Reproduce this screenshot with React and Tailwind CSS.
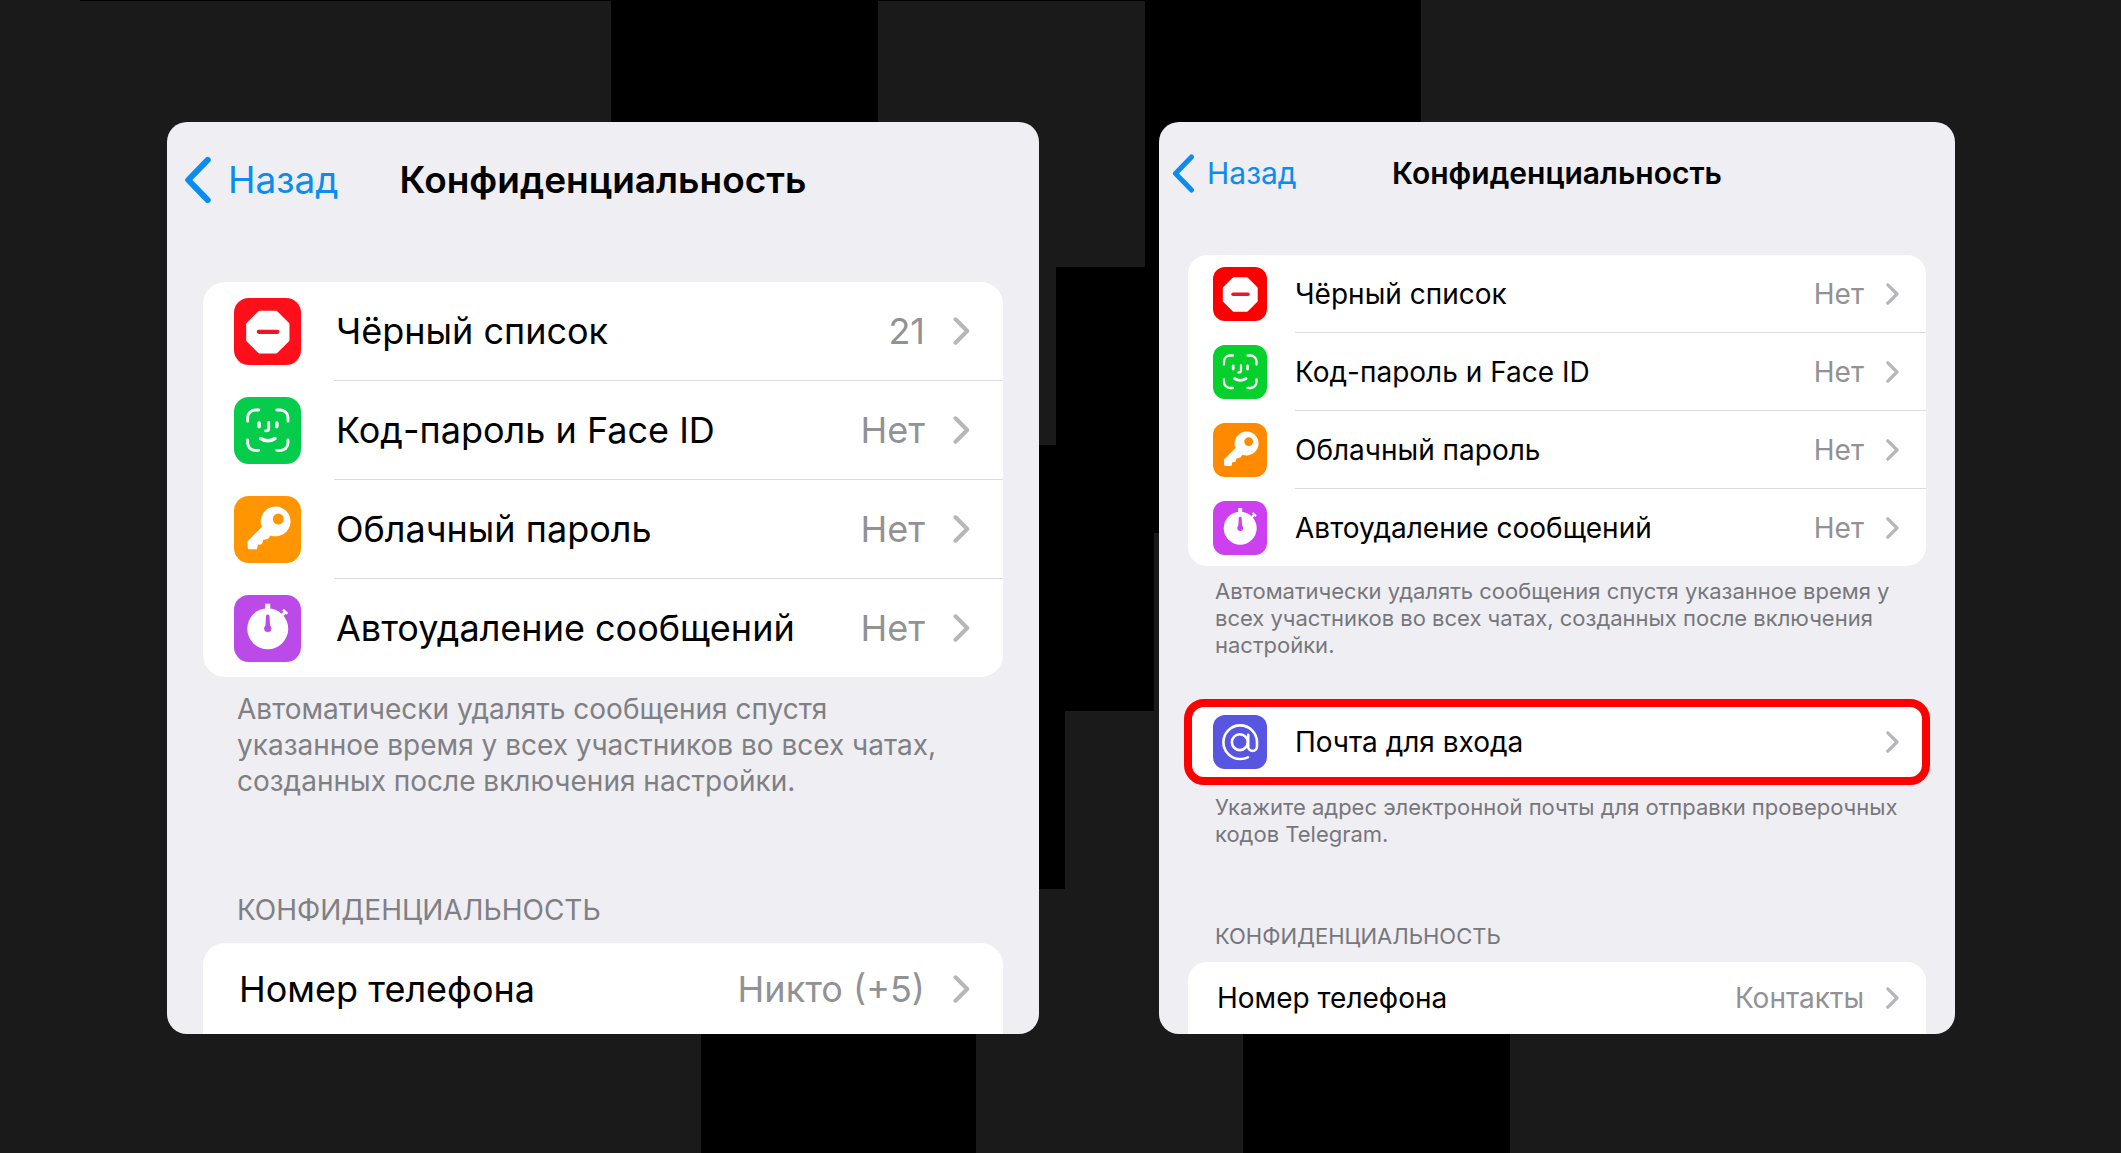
import { clsx } from "clsx";

function Backdrop() {
  return (
    <svg
      className="absolute inset-0 h-full w-full"
      viewBox="0 0 2121 1153"
      preserveAspectRatio="xMidYMid slice"
      aria-hidden="true"
    >
      <rect x="80" y="0" width="1341" height="1" fill="#000" />
      <rect x="611" y="0" width="267" height="267" fill="#000" />
      <rect x="1145" y="0" width="276" height="267" fill="#000" />
      <path d="M1056 267H1421V533H1154V711H1065V889H878V445H1056Z" fill="#000" />
      <rect x="701" y="889" width="275" height="264" fill="#000" />
      <rect x="1243" y="889" width="267" height="264" fill="#000" />
    </svg>
  );
}

function BlockIcon() {
  return (
    <>
      <path
        d="M20.5 11.5H34L43.5 21V34L34 43.5H20.5L11 34V21Z"
        fill="#fff"
        stroke="#fff"
        strokeWidth="2.4"
        strokeLinejoin="round"
      />
      <path d="M20 27.3H35" stroke="#e8182a" strokeWidth="3.4" strokeLinecap="round" />
    </>
  );
}

function FaceIcon() {
  return (
    <g fill="none" stroke="#fff" strokeWidth="2.3" strokeLinecap="round">
      <path d="M11 19.5V16.5A6 6 0 0 1 17 10.5H20" />
      <path d="M34.5 10.5H37.5A6 6 0 0 1 43.5 16.5V19.5" />
      <path d="M43.5 34.5V37A6 6 0 0 1 37.5 43H34.5" />
      <path d="M20 43H17A6 6 0 0 1 11 37V34.5" />
      <path d="M20.2 21V24" strokeWidth="2.8" />
      <path d="M34.5 21V24" strokeWidth="2.8" />
      <path d="M28 20.5V25.5Q28 27.5 25.5 27.3" />
      <path d="M21.5 33.5Q27.3 37.2 33 33.5" strokeWidth="2.8" />
    </g>
  );
}

function KeyIcon() {
  return (
    <path
      fill="#fff"
      fillRule="evenodd"
      d="M33.5 8.5A12 12 0 1 1 29.5 31.8L27.5 34.5L23.5 35.5L22.5 38.8L19.3 39.2L18.5 43H12.5Q11 43 11 41.5V36.5L22.4 25A12 12 0 0 1 33.5 8.5ZM35.7 14.2A4.4 4.4 0 1 0 35.7 23A4.4 4.4 0 1 0 35.7 14.2Z"
    />
  );
}

function TimerIcon({ color }) {
  return (
    <>
      <circle cx="27.2" cy="27.2" r="16.5" fill="#fff" />
      <path d="M27.2 7V12" stroke="#fff" strokeWidth="4" />
      <path d="M37 18L41.5 13.5" stroke="#fff" strokeWidth="2.4" />
      <path d="M39.5 11.8L43 15.3" stroke="#fff" strokeWidth="2" />
      <path d="M25.8 16.5Q27.2 15 28.6 16.5L29.1 26H25.3Z" fill={color} />
      <circle cx="27.2" cy="27" r="2.9" fill={color} />
    </>
  );
}

function AtIcon() {
  return (
    <g fill="none" stroke="#fff" strokeWidth="2.6" strokeLinecap="round">
      <circle cx="26.8" cy="27.2" r="7.9" />
      <path d="M35.2 19.8V31.5A4.4 4.4 0 0 0 44 31.5V27.2A16.8 16.8 0 1 0 27.2 44Q31.5 44 35 42.3" />
    </g>
  );
}

const glyphs = { block: BlockIcon, face: FaceIcon, key: KeyIcon, timer: TimerIcon, at: AtIcon };

function AppIcon({ name, color, large }) {
  const Glyph = glyphs[name];
  return (
    <svg
      className={clsx("shrink-0", large ? "size-[67px]" : "size-[54px]")}
      viewBox="0 0 54 54"
      aria-hidden="true"
    >
      <rect width="54" height="54" rx="12" fill={color} />
      <Glyph color={color} />
    </svg>
  );
}

function Chevron({ large }) {
  return (
    <svg
      className={clsx("shrink-0", large ? "h-[28px] w-[17px]" : "h-[22px] w-[13px]")}
      viewBox="0 0 13 22"
      fill="none"
      stroke="#b7b7ba"
      strokeWidth="3.2"
      strokeLinecap="round"
      strokeLinejoin="round"
      aria-hidden="true"
    >
      <path d="M1.8 1.8L11 11L1.8 20.2" />
    </svg>
  );
}

// Spacing of a row: the full-height list rows, the bordered one, and the rows cut by the card's edge.
const rowSizes = {
  large: "min-h-[98px] pl-[2px] pr-[33px]",
  largeShort: "min-h-[91px] pr-[33px]",
  small: "min-h-[77px] pr-[27px]",
  smallShort: "min-h-[72px] pr-[27px]",
  framed: "min-h-[70px] pr-[23px]",
};

const rowInsets = {
  large: "gap-[33px] pl-[31px]",
  largeShort: "pl-9",
  small: "gap-7 pl-[25px]",
  smallShort: "pl-[29px]",
  framed: "gap-7 pl-[21px]",
};

function Row({ size, icon, color, label, value, last }) {
  const large = size === "large" || size === "largeShort";
  return (
    <li>
      <button
        type="button"
        className={clsx(
          "flex w-full items-stretch text-left",
          large ? "text-[36px] leading-[44px]" : "text-[28px] leading-[36px]",
          rowInsets[size],
        )}
      >
        {icon && (
          <span className="flex items-center">
            <AppIcon name={icon} color={color} large={large} />
          </span>
        )}
        <span
          className={clsx(
            "flex flex-1 items-center whitespace-nowrap",
            large ? "gap-7" : "gap-[22px]",
            rowSizes[size],
            !last && "box-content border-b border-[#dcdcde]",
          )}
        >
          <span className="flex-1 text-black">{label}</span>
          {value && <span className="text-[#929295]">{value}</span>}
          <Chevron large={large} />
        </span>
      </button>
    </li>
  );
}

function NavBar({ large }) {
  return (
    <header
      className={clsx(
        "grid grid-cols-[1fr_auto_1fr] items-center",
        large ? "h-[116px] px-[17px] text-[37px]" : "h-[102px] px-[13px] text-[30px]",
      )}
    >
      <a
        href="#back"
        className={clsx("flex items-center text-[#0a8cf0]", large ? "gap-4" : "gap-3")}
      >
        <svg
          className={large ? "h-[48px] w-[28px]" : "h-[39px] w-[23px]"}
          viewBox="0 0 23 39"
          fill="none"
          stroke="currentColor"
          strokeWidth="5"
          strokeLinecap="round"
          strokeLinejoin="round"
          aria-hidden="true"
        >
          <path d="M19.5 3L3.5 19.5L19.5 36" />
        </svg>
        Назад
      </a>
      <h1 className="font-semibold text-black">Конфиденциальность</h1>
    </header>
  );
}

const palettes = {
  large: { block: "#fe0f1a", face: "#06cc4b", key: "#ff9500", timer: "#bb4ae8" },
  small: { block: "#fd0000", face: "#05d02c", key: "#ff8a00", timer: "#cc40f0" },
};

function SecurityList({ size, blocked }) {
  const palette = palettes[size];
  return (
    <ul
      className={clsx(
        "overflow-hidden bg-white",
        size === "large" ? "rounded-[22px]" : "rounded-[19px]",
      )}
    >
      <Row size={size} icon="block" color={palette.block} label="Чёрный список" value={blocked} />
      <Row size={size} icon="face" color={palette.face} label="Код-пароль и Face ID" value="Нет" />
      <Row size={size} icon="key" color={palette.key} label="Облачный пароль" value="Нет" />
      <Row size={size} icon="timer" color={palette.timer} label="Автоудаление сообщений" value="Нет" last />
    </ul>
  );
}

const autoDeleteNote =
  "Автоматически удалять сообщения спустя указанное время у всех участников во всех чатах, созданных после включения настройки.";

export default function App() {
  return (
    <main className="relative min-h-screen bg-[#1a1a1a] font-['Inter','Liberation_Sans',sans-serif]">
      <Backdrop />
      <div className="relative grid grid-cols-[872fr_796fr] gap-[120px] pt-[122px] pr-[166px] pb-[119px] pl-[167px]">
        <section className="flex flex-col overflow-hidden rounded-[20px] bg-[#eeeef3]">
          <NavBar large />
          <div className="flex flex-1 flex-col px-9 pt-11">
            <SecurityList size="large" blocked="21" />
            <p className="px-[34px] pt-[14px] text-[28px] leading-[36px] text-[#808084]">{autoDeleteNote}</p>
            <h2 className="px-[34px] pt-[93px] pb-[15px] text-[28px] leading-[36px] text-[#808084]">
              КОНФИДЕНЦИАЛЬНОСТЬ
            </h2>
            <ul className="flex-1 rounded-t-[22px] bg-white">
              <Row size="largeShort" label="Номер телефона" value="Никто (+5)" last />
            </ul>
          </div>
        </section>

        <section className="flex flex-col overflow-hidden rounded-[20px] bg-[#eeeef3]">
          <NavBar />
          <div className="flex flex-1 flex-col px-[29px] pt-[31px]">
            <SecurityList size="small" blocked="Нет" />
            <p className="pt-3 pr-4 pl-[27px] text-[22px] leading-[27px] text-[#77777b]">{autoDeleteNote}</p>
            <ul className="-mx-1 mt-10 rounded-[20px] border-8 border-[#fd0000] bg-white">
              <Row size="framed" icon="at" color="#5856e0" label="Почта для входа" last />
            </ul>
            <p className="pt-[9px] pr-4 pl-[27px] text-[22px] leading-[27px] text-[#77777b]">
              Укажите адрес электронной почты для отправки проверочных кодов Telegram.
            </p>
            <h2 className="px-[27px] pt-[75px] pb-3 text-[22px] leading-[27px] text-[#77777b]">
              КОНФИДЕНЦИАЛЬНОСТЬ
            </h2>
            <ul className="flex-1 rounded-t-[19px] bg-white">
              <Row size="smallShort" label="Номер телефона" value="Контакты" last />
            </ul>
          </div>
        </section>
      </div>
    </main>
  );
}
